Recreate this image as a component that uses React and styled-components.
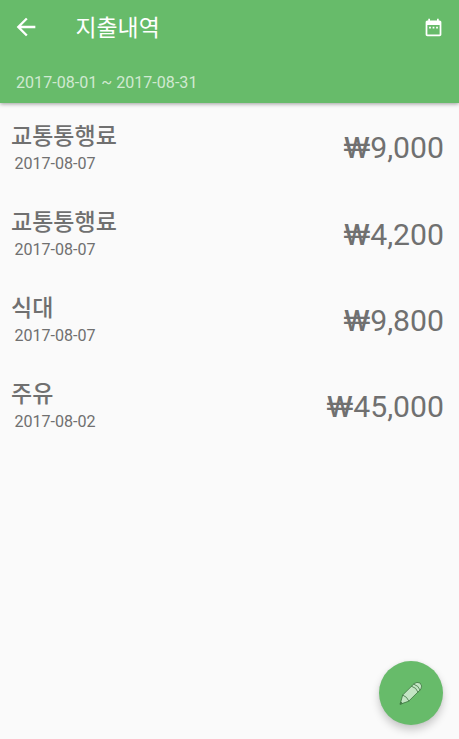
import React from "react";
import styled, { createGlobalStyle } from "styled-components";

const GlobalStyle = createGlobalStyle`
  * { box-sizing: border-box; }
  html, body { margin: 0; height: 100%; background: #fafafa; overflow: hidden; }
  body { font-family: Roboto, "Noto Sans CJK KR", sans-serif; }
`;

const Screen = styled.div`
  position: relative;
  height: 739px;
  background: #fafafa;
`;

const Header = styled.header`
  height: 103px;
  background: #67bb6a;
  color: #fff;
  box-shadow: 0 1px 4px rgba(0, 0, 0, 0.38);
`;

const Toolbar = styled.div`
  display: flex;
  align-items: center;
  height: 54px;
  padding: 0 15px 0 12px;
`;

const Icon = styled.svg`
  display: block;
  flex: none;
  width: ${(p) => p.$size}px;
  height: ${(p) => p.$size}px;
  fill: currentColor;
`;

const Title = styled.h1`
  flex: 1;
  margin: 3px 0 0 35.5px;
  font-size: 22.9px;
  line-height: 32px;
  font-weight: 400;
`;

const Period = styled.div`
  padding: 19px 16px 0;
  font-size: 16.1px;
  line-height: 20px;
  color: rgba(255, 255, 255, 0.7);
`;

const List = styled.ul`
  margin: 0;
  padding: 16.6px 0 0;
  list-style: none;
`;

const Row = styled.li`
  display: flex;
  justify-content: space-between;
  height: 86.3px;
  padding: 0 15px 0 11px;
  color: #707070;
`;

const Category = styled.div`
  font-size: 23px;
  line-height: 34px;
  font-weight: 500;
`;

const DateText = styled.div`
  padding-left: 3.4px;
  font-size: 16.1px;
  line-height: 19px;
`;

const Amount = styled.div`
  padding-top: 10.7px;
  font-size: 30.2px;
  line-height: 36px;
`;

const Won = styled.span`
  display: inline-block;
  transform: scaleX(1.2);
  transform-origin: right center;
`;

const Fab = styled.button`
  position: absolute;
  right: 16px;
  bottom: 14px;
  display: flex;
  align-items: center;
  justify-content: center;
  width: 64px;
  height: 64px;
  padding: 0;
  border: 0;
  border-radius: 50%;
  background: #67bb6a;
  box-shadow: 0 5px 9px rgba(0, 0, 0, 0.2), 0 0 3px rgba(0, 0, 0, 0.06);
`;

const expenses = [
  { name: "교통통행료", date: "2017-08-07", amount: "9,000" },
  { name: "교통통행료", date: "2017-08-07", amount: "4,200" },
  { name: "식대", date: "2017-08-07", amount: "9,800" },
  { name: "주유", date: "2017-08-02", amount: "45,000" },
];

const BackIcon = () => (
  <Icon $size={28} viewBox="0 0 24 24">
    <path d="M20 11H7.83l5.59-5.59L12 4l-8 8 8 8 1.41-1.41L7.83 13H20v-2z" />
  </Icon>
);

const CalendarIcon = () => (
  <Icon $size={21} viewBox="0 0 24 24">
    <path d="M9 11H7v2h2v-2zm4 0h-2v2h2v-2zm4 0h-2v2h2v-2zm2-7h-1V2h-2v2H8V2H6v2H5c-1.11 0-1.99.9-1.99 2L3 20c0 1.1.89 2 2 2h14c1.1 0 2-.9 2-2V6c0-1.100-.9-2-2-2zm0 16H5V9h14v11z" />
  </Icon>
);

const PencilIcon = () => (
  <Icon $size={26} viewBox="0 0 26 26">
    <g stroke="#427a45" strokeWidth="0.85" strokeLinejoin="round" strokeLinecap="round">
      <path fill="#c3e5c4" d="M2.200 23.900 4.700 15 16.200 3.600Q18.800 1.500 22.100 3Q24.900 6 22.900 9.100L10.900 21Z" />
      <path fill="none" d="M4.700 15Q9.200 16.600 10.900 21M13.600 6.200Q18.400 7.400 20 12M15.800 4.100Q20.700 5.600 22.100 10" />
      <path fill="#427a45" d="M2.200 23.900 2.800 21.900 4.200 23.200Z" />
    </g>
  </Icon>
);

export default function App() {
  return (
    <Screen>
      <GlobalStyle />
      <Header>
        <Toolbar>
          <BackIcon />
          <Title>지출내역</Title>
          <CalendarIcon />
        </Toolbar>
        <Period>2017-08-01 ~ 2017-08-31</Period>
      </Header>
      <List>
        {expenses.map((item, index) => (
          <Row key={index}>
            <div>
              <Category>{item.name}</Category>
              <DateText>{item.date}</DateText>
            </div>
            <Amount>
              <Won>₩</Won>
              {item.amount}
            </Amount>
          </Row>
        ))}
      </List>
      <Fab aria-label="지출 추가">
        <PencilIcon />
      </Fab>
    </Screen>
  );
}
